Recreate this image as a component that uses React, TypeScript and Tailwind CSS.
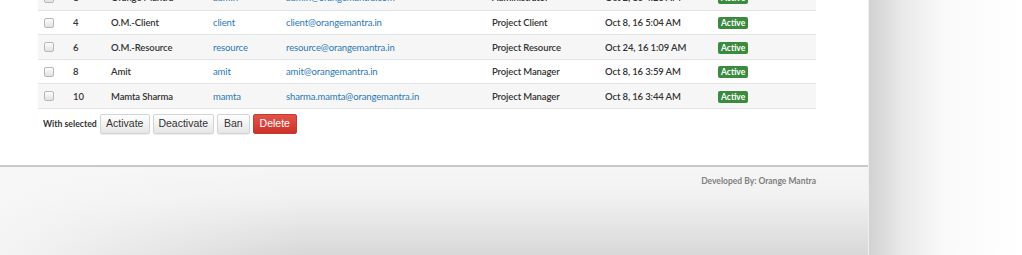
import React from "react";

const rows = [
  { id: "1", name: "Orange Mantra", user: "admin", email: "admin@orangemantra.com", role: "Administrator", date: "Oct 2, 16 4:26 AM" },
  { id: "4", name: "O.M.-Client", user: "client", email: "client@orangemantra.in", role: "Project Client", date: "Oct 8, 16 5:04 AM" },
  { id: "6", name: "O.M.-Resource", user: "resource", email: "resource@orangemantra.in", role: "Project Resource", date: "Oct 24, 16 1:09 AM" },
  { id: "8", name: "Amit", user: "amit", email: "amit@orangemantra.in", role: "Project Manager", date: "Oct 8, 16 3:59 AM" },
  { id: "10", name: "Mamta Sharma", user: "mamta", email: "sharma.mamta@orangemantra.in", role: "Project Manager", date: "Oct 8, 16 3:44 AM" },
];

const actions = [
  { label: "Activate", w: "w-[50px]" },
  { label: "Deactivate", w: "w-[61px]" },
  { label: "Ban", w: "w-[33px]" },
];

function Checkbox() {
  return (
    <span className="block w-[10px] h-[10px] rounded-[2px] border border-[#b8b8b8] bg-gradient-to-b from-[#fdfdfd] to-[#e2e2e2]" />
  );
}

export default function App() {
  return (
    <div
      className="flex w-[1022px] h-[255px] overflow-hidden bg-white text-[#333]"
      style={{ fontFamily: 'Lato, "Open Sans", sans-serif' }}
    >
      <div className="w-[868px] flex flex-col shrink-0">
        <div className="h-[167px] bg-white border-b-2 border-[#c9c9c9] overflow-hidden">
          <table className="table-fixed border-collapse ml-[38px] w-[778px] -mt-[14.5px] text-[9.5px] tracking-[-0.12px]">
            <colgroup>
              <col className="w-[27px]" />
              <col className="w-[38px]" />
              <col className="w-[102px]" />
              <col className="w-[73px]" />
              <col className="w-[206px]" />
              <col className="w-[113px]" />
              <col className="w-[113px]" />
              <col className="w-[106px]" />
            </colgroup>
            <tbody>
              {rows.map((r, i) => (
                <tr
                  key={r.id}
                  className={`h-[24.5px] border-b border-[#e3e3e3] ${i % 2 === 0 ? "bg-[#f6f6f6]" : "bg-white"}`}
                >
                  <td className="pl-[6px] pt-[1px] align-middle">
                    <Checkbox />
                  </td>
                  <td className="pl-[8px] pt-[2px] font-semibold">{r.id}</td>
                  <td className="pl-[8px] pt-[2px] font-semibold whitespace-nowrap">{r.name}</td>
                  <td className="pl-[8px] pt-[2px] text-[#2a78b6]">{r.user}</td>
                  <td className="pl-[8px] pt-[2px] text-[#2a78b6] whitespace-nowrap">{r.email}</td>
                  <td className="pl-[8px] pt-[2px] font-semibold whitespace-nowrap">{r.role}</td>
                  <td className="pl-[8px] pt-[2px] font-semibold whitespace-nowrap">{r.date}</td>
                  <td className="pl-[8px] pt-[2px]">
                    <span className="inline-block px-[3px] leading-[12px] rounded-[2px] bg-[#3b8a3e] text-white text-[8.5px] font-bold tracking-normal">
                      Active
                    </span>
                  </td>
                </tr>
              ))}
            </tbody>
          </table>
          <div className="flex items-center ml-[43px] mt-[5px] gap-[3px]">
            <span className="text-[8.7px] font-bold">With selected</span>
            {actions.map((b) => (
              <button
                key={b.label}
                className={`${b.w} h-[20px] rounded-[2px] border border-[#d4d4d4] bg-gradient-to-b from-white to-[#e6e6e6] text-[10.5px] text-[#333] shadow-[0_1px_1px_rgba(0,0,0,0.08)]`}
                style={{ fontFamily: '"Liberation Sans", Arial, sans-serif' }}
              >
                {b.label}
              </button>
            ))}
            <button
              className="w-[44px] h-[20px] rounded-[2px] border border-[#c23a32] bg-gradient-to-b from-[#e2534a] to-[#cc3129] text-[10.5px] text-white"
              style={{ fontFamily: '"Liberation Sans", Arial, sans-serif' }}
            >
              Delete
            </button>
          </div>
        </div>
        <div className="flex-1 bg-[linear-gradient(to_right,rgba(247,247,247,0.9),rgba(247,247,247,0)_35%),linear-gradient(to_bottom,#f6f6f6,#f1f1f1_35%,#d8d8d8)] flex justify-end pr-[52px] pt-[8px]">
          <span className="text-[8.5px] font-bold text-[#808080] leading-[12px]">Developed By: Orange Mantra</span>
        </div>
      </div>
      <div className="flex-1 border-l border-[#efefef] bg-[linear-gradient(to_right,#d2d2d2,#e9e9e9_22%,#f9f9f9_48%,#ffffff)]" />
    </div>
  );
}
